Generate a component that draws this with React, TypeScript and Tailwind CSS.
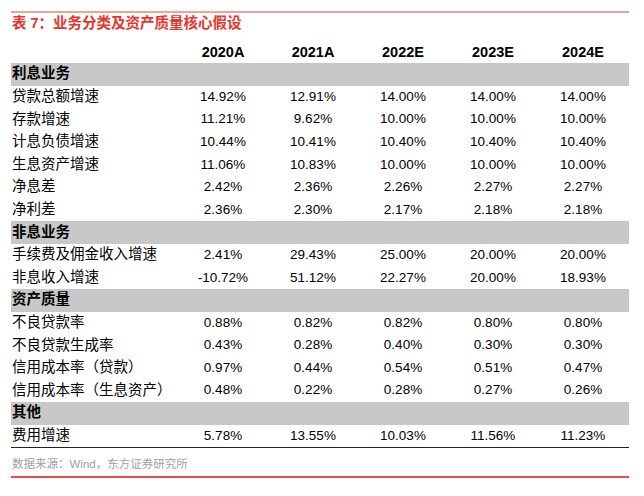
import React from "react";

type Row = { label: string; section?: boolean; values?: string[] };

const rows: Row[] = [
  { label: "利息业务", section: true },
  { label: "贷款总额增速", values: ["14.92%", "12.91%", "14.00%", "14.00%", "14.00%"] },
  { label: "存款增速", values: ["11.21%", "9.62%", "10.00%", "10.00%", "10.00%"] },
  { label: "计息负债增速", values: ["10.44%", "10.41%", "10.40%", "10.40%", "10.40%"] },
  { label: "生息资产增速", values: ["11.06%", "10.83%", "10.00%", "10.00%", "10.00%"] },
  { label: "净息差", values: ["2.42%", "2.36%", "2.26%", "2.27%", "2.27%"] },
  { label: "净利差", values: ["2.36%", "2.30%", "2.17%", "2.18%", "2.18%"] },
  { label: "非息业务", section: true },
  { label: "手续费及佣金收入增速", values: ["2.41%", "29.43%", "25.00%", "20.00%", "20.00%"] },
  { label: "非息收入增速", values: ["-10.72%", "51.12%", "22.27%", "20.00%", "18.93%"] },
  { label: "资产质量", section: true },
  { label: "不良贷款率", values: ["0.88%", "0.82%", "0.82%", "0.80%", "0.80%"] },
  { label: "不良贷款生成率", values: ["0.43%", "0.28%", "0.40%", "0.30%", "0.30%"] },
  { label: "信用成本率（贷款）", values: ["0.97%", "0.44%", "0.54%", "0.51%", "0.47%"] },
  { label: "信用成本率（生息资产）", values: ["0.48%", "0.22%", "0.28%", "0.27%", "0.26%"] },
  { label: "其他", section: true },
  { label: "费用增速", values: ["5.78%", "13.55%", "10.03%", "11.56%", "11.23%"] },
];

const years = ["2020A", "2021A", "2022E", "2023E", "2024E"];

const font = { fontFamily: '"Liberation Sans", Arial, "Noto Sans CJK SC", sans-serif' };

export default function App() {
  return (
    <div className="w-[644px] h-[496px] bg-white pl-[11px] pr-[15px] overflow-hidden" style={font}>
      <div className="pt-[11px]">
        <div className="h-[2px] bg-[#f4a19d]" />
      </div>
      <div className="h-[21px] flex items-center text-[14.5px] font-bold text-[#e8342c] pl-px">
        表 7：业务分类及资产质量核心假设
      </div>
      <div className="h-[29px] flex items-end pb-[2px] text-[14.5px] font-bold text-black leading-[17px]">
        <div className="w-[167px]" />
        {years.map((y) => (
          <div key={y} className="w-[90px] text-center">
            {y}
          </div>
        ))}
      </div>
      <div className="border-b border-[#222]">
        {rows.map((r, i) =>
          r.section ? (
            <div key={i} className="h-[22.6px] flex items-center bg-[#c8c8c8] text-[14.5px] font-bold text-black pl-px">
              {r.label}
            </div>
          ) : (
            <div key={i} className="h-[22.6px] flex items-center text-black">
              <div className="w-[167px] text-[14.5px] pl-px whitespace-nowrap">{r.label}</div>
              {r.values!.map((v, j) => (
                <div key={j} className="w-[90px] text-center text-[13.5px]">
                  {v}
                </div>
              ))}
            </div>
          )
        )}
      </div>
      <div className="mt-[10px] h-[14px] flex items-center text-[11.5px] text-[#a0a0a0] pl-px">
        数据来源：Wind，东方证券研究所
      </div>
      <div className="mt-[4px] h-[2px] bg-[#ef4a45]" />
    </div>
  );
}
